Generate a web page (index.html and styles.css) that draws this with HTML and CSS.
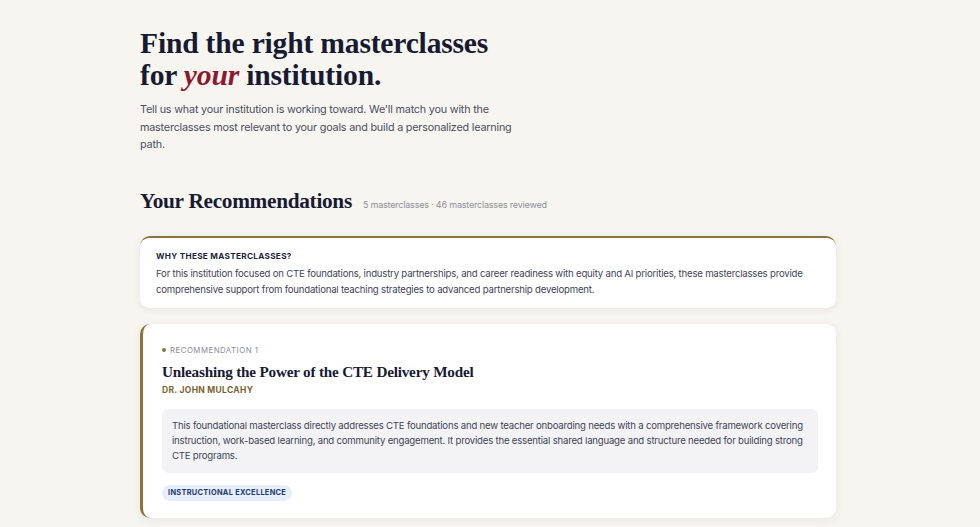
FILE: index.html
```html
<!DOCTYPE html>
<html lang="en">
<head>
    <meta charset="UTF-8">
    <meta name="viewport" content="width=device-width, initial-scale=1.0">
    <title>Find the right masterclasses</title>
    <link rel="stylesheet" href="styles.css">
</head>
<body>
    <div class="page">
        <header class="intro">
            <h1>Find the right masterclasses<br>for <em>your</em> institution.</h1>
            <p>Tell us what your institution is working toward. We'll match you with the masterclasses most relevant to your goals and build a personalized learning path.</p>
        </header>

        <section class="results">
            <div class="results-head">
                <h2>Your Recommendations</h2>
                <span class="meta">5 masterclasses · 46 masterclasses reviewed</span>
            </div>

            <div class="card why">
                <h3>Why these masterclasses?</h3>
                <p>For this institution focused on CTE foundations, industry partnerships, and career readiness with equity and AI priorities, these masterclasses provide comprehensive support from foundational teaching strategies to advanced partnership development.</p>
            </div>

            <div class="card rec">
                <div class="rec-label"><span class="dot"></span>Recommendation 1</div>
                <h4>Unleashing the Power of the CTE Delivery Model</h4>
                <div class="author">Dr. John Mulcahy</div>
                <div class="reason">This foundational masterclass directly addresses CTE foundations and new teacher onboarding needs with a comprehensive framework covering instruction, work-based learning, and community engagement. It provides the essential shared language and structure needed for building strong CTE programs.</div>
                <span class="tag">Instructional Excellence</span>
            </div>
        </section>
    </div>
</body>
</html>
```

FILE: styles.css
```css
body {
    margin: 0;
    background: #f7f5f0;
    font-family: 'Inter', 'Noto Sans', sans-serif;
    color: #1b1f3a;
}
.page {
    width: 696px;
    margin: 0 auto;
    padding: 27px 4px 40px 0;
}
h1 {
    font-family: 'Liberation Serif', serif;
    font-weight: 700;
    font-size: 29.6px;
    line-height: 32px;
    margin: 0;
    color: #171a33;
    letter-spacing: -0.2px;
}
h1 em {
    color: #8b1a2e;
    font-style: italic;
}
.intro p {
    width: 380px;
    font-size: 10.8px;
    letter-spacing: -0.2px;
    line-height: 17.5px;
    color: #4a4e60;
    margin: 10px 0 0;
}
.results {
    margin-top: 35px;
}
.results-head {
    display: flex;
    align-items: baseline;
    gap: 11px;
}
h2 {
    font-family: 'Liberation Serif', serif;
    font-weight: 700;
    font-size: 21.3px;
    margin: 0;
    color: #171a33;
    letter-spacing: -0.3px;
}
.meta {
    font-size: 9px;
    letter-spacing: -0.2px;
    color: #8e909c;
}
.card {
    background: #fff;
    border-radius: 10px;
    box-shadow: 0 2px 10px rgba(60, 50, 30, 0.07);
}
.why {
    margin-top: 22px;
    border-top: 2px solid #8b7440;
    padding: 13px 16px 10px;
}
.why h3 {
    margin: 0;
    font-size: 8.2px;
    font-weight: 700;
    letter-spacing: 0.3px;
    text-transform: uppercase;
    color: #1b1f3a;
}
.why p {
    margin: 5px 0 0;
    font-size: 9.6px;
    letter-spacing: -0.2px;
    line-height: 16px;
    color: #3f4355;
}
.rec {
    margin-top: 16px;
    border-left: 3px solid #8b7440;
    padding: 21px 18px 17px 19px;
}
.rec-label {
    display: flex;
    align-items: center;
    gap: 4px;
    font-size: 7.8px;
    letter-spacing: 0.5px;
    text-transform: uppercase;
    color: #8a8c98;
}
.dot {
    width: 4px;
    height: 4px;
    border-radius: 50%;
    background: #8b7440;
}
.rec h4 {
    font-family: 'Liberation Serif', serif;
    font-weight: 700;
    font-size: 15.2px;
    margin: 8px 0 0;
    color: #171a33;
    letter-spacing: -0.2px;
}
.author {
    margin-top: 4px;
    font-size: 8.5px;
    font-weight: 700;
    letter-spacing: 0.3px;
    text-transform: uppercase;
    color: #7a6330;
}
.reason {
    margin-top: 14px;
    background: #f3f3f5;
    border-radius: 6px;
    padding: 9px 10px 10px;
    font-size: 9.6px;
    letter-spacing: -0.2px;
    line-height: 15px;
    color: #3f4355;
}
.tag {
    display: inline-block;
    margin-top: 12px;
    background: #e6eefb;
    color: #1f3a6c;
    border-radius: 10px;
    padding: 3.5px 6px;
    font-size: 7.4px;
    font-weight: 700;
    letter-spacing: 0.3px;
    text-transform: uppercase;
}
```
